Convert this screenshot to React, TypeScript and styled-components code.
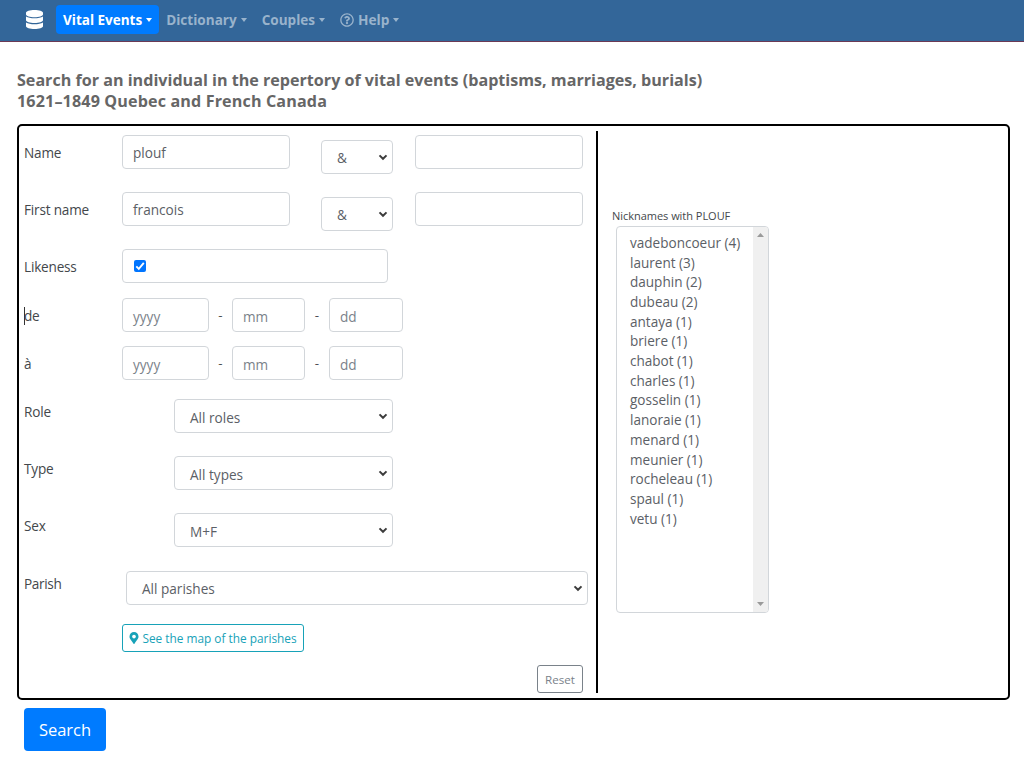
import React from 'react';
import styled, { createGlobalStyle } from 'styled-components';

const GlobalStyle = createGlobalStyle`
  *, *::before, *::after { box-sizing: border-box; }
  body {
    margin: 0;
    background: #fff;
    color: #4c4f52;
    font-family: "Open Sans", "Noto Sans", sans-serif;
    font-size: 13.4px;
  }
`;

const Navbar = styled.nav`
  display: flex;
  align-items: flex-start;
  height: 42px;
  padding: 5px 0 0 26px;
  background: #336699;
  border-bottom: 1px solid #6b3a55;
`;

const Brand = styled.a`
  display: flex;
  width: 17px;
  margin: 5px 13px 0 0;
`;

const NavItem = styled.a<{ $active?: boolean; $size?: number; $gap?: number }>`
  display: flex;
  align-items: center;
  height: 29px;
  padding: 0 7px;
  margin-right: ${p => p.$gap ?? 0}px;
  border-radius: 4px;
  font-size: ${p => p.$size ?? 13.55}px;
  font-weight: 700;
  white-space: nowrap;
  color: ${p => (p.$active ? '#fff' : '#99b3cc')};
  background: ${p => (p.$active ? '#007bff' : 'transparent')};
`;

const Caret = styled.span`
  margin: 0 0 0 4px;
  border-top: 4px solid currentColor;
  border-left: 3.5px solid transparent;
  border-right: 3.5px solid transparent;
`;

const HelpMark = styled.svg`
  margin-right: 4px;
`;

const Title = styled.h1`
  margin: 28px 0 0 17px;
  font-size: 16.13px;
  line-height: 20.6px;
  font-weight: 700;
  color: #666;
`;

const TitleLine = styled.span<{ $tracking?: number }>`
  display: block;
  letter-spacing: ${p => p.$tracking ?? 0}px;
`;

const Panel = styled.section`
  display: flex;
  align-items: flex-start;
  width: 993px;
  height: 576px;
  margin: 13px 0 0 17px;
  padding-top: 5px;
  border: 2px solid #000;
  border-radius: 5px;
`;

const FormColumn = styled.div`
  width: 579px;
  height: 562px;
  padding: 4px 0 0 5px;
  border-right: 2px solid #000;
`;

const Row = styled.div<{ $height: number }>`
  display: flex;
  align-items: flex-start;
  height: ${p => p.$height}px;
`;

const Label = styled.label<{ $tracking?: number }>`
  flex: none;
  width: 98px;
  line-height: 35px;
  font-size: 13.6px;
  letter-spacing: ${p => p.$tracking ?? -0.2}px;
  color: #43474b;
`;

const Field = styled.div<{ $width: number; $muted?: boolean }>`
  display: flex;
  flex: none;
  align-items: center;
  width: ${p => p.$width}px;
  height: 34px;
  padding: ${p => (p.$muted ? 2 : 1)}px 0 0 10px;
  border: 1px solid #d2d6da;
  border-radius: 4px;
  font-size: 13.6px;
  color: ${p => (p.$muted ? '#7a828a' : '#5b6066')};
`;

const Select = styled(Field)<{ $left?: number; $top?: number; $right?: number }>`
  justify-content: space-between;
  margin: ${p => p.$top ?? 0}px ${p => p.$right ?? 0}px 0 ${p => p.$left ?? 0}px;
  padding: 0 4px 0 15px;
`;

const SelectText = styled.span<{ $drop?: number }>`
  padding-top: ${p => p.$drop ?? 1}px;
`;

const Dash = styled.span<{ $width: number }>`
  width: ${p => p.$width}px;
  line-height: 34px;
  text-align: center;
`;

const CheckBox = styled.span`
  display: flex;
  width: 12px;
  height: 12px;
  margin: -1px 0 0 1px;
  border-radius: 2px;
  background: #0075ff;
`;

const TextCursor = styled.i`
  display: inline-block;
  width: 1px;
  height: 18px;
  margin: -3px -1px 0 0;
  vertical-align: middle;
  background: #333;
`;

const OutlineButton = styled.button<{ $tone: string; $size: number; $width: number; $left: number }>`
  display: flex;
  align-items: center;
  justify-content: center;
  gap: 3px;
  width: ${p => p.$width}px;
  height: 28px;
  margin-left: ${p => p.$left}px;
  padding: 0;
  border: 1px solid ${p => p.$tone};
  border-radius: 3px;
  background: #fff;
  color: ${p => p.$tone};
  font: 400 ${p => p.$size}px "Open Sans", sans-serif;
  white-space: nowrap;
`;

const NicknameColumn = styled.div`
  padding: 74px 0 0 14px;
`;

const NicknameTitle = styled.div`
  height: 21px;
  line-height: 21px;
  font-size: 11px;
  letter-spacing: -0.03px;
  color: #43474b;
`;

const ListBox = styled.div`
  display: flex;
  justify-content: space-between;
  width: 153px;
  height: 387px;
  margin-left: 4px;
  border: 1px solid #d2d6da;
  border-radius: 4px;
  overflow: hidden;
`;

const Options = styled.ul`
  margin: 0;
  padding: 6.8px 0 0 13px;
  list-style: none;
  font-size: 13.55px;
  line-height: 19.68px;
  white-space: nowrap;
  color: #5b6066;
`;

const ScrollTrack = styled.div`
  display: flex;
  flex-direction: column;
  align-items: center;
  justify-content: space-between;
  width: 15px;
  padding: 6px 0;
  background: #f0f0f0;
`;

const SearchButton = styled.button`
  width: 82px;
  height: 43px;
  margin: 8px 0 0 24px;
  padding: 0 0 1px;
  border: 0;
  border-radius: 4px;
  background: #007bff;
  color: #fff;
  font: 400 16.5px "Open Sans", sans-serif;
`;

const Chevron = () => (
  <svg width="10" height="8" viewBox="0 0 10 8" fill="none">
    <path d="M1.5 2.4 5 5.8 8.5 2.4" stroke="#3c3c3c" strokeWidth="2" />
  </svg>
);

const ScrollArrow = ({ up }: { up?: boolean }) => (
  <svg width="7" height="4" viewBox="0 0 7 4">
    <path d={up ? 'M0 4 3.5 0 7 4Z' : 'M0 0 3.5 4 7 0Z'} fill="#9a9a9a" />
  </svg>
);

const nicknames = [
  'vadeboncoeur (4)', 'laurent (3)', 'dauphin (2)', 'dubeau (2)', 'antaya (1)',
  'briere (1)', 'chabot (1)', 'charles (1)', 'gosselin (1)', 'lanoraie (1)',
  'menard (1)', 'meunier (1)', 'rocheleau (1)', 'spaul (1)', 'vetu (1)',
];

const NameRow = ({ label, value, height }: { label: string; value: string; height: number }) => (
  <Row $height={height}>
    <Label>{label}</Label>
    <Field $width={168}>{value}</Field>
    <Select $width={72} $left={31} $top={4.5} $right={22}>
      <SelectText>&amp;</SelectText>
      <Chevron />
    </Select>
    <Field $width={168} />
  </Row>
);

const DateRow = ({ label, height, cursor }: { label: string; height: number; cursor?: boolean }) => (
  <Row $height={height}>
    <Label>{cursor && <TextCursor />}{label}</Label>
    <Field $width={87} $muted>yyyy</Field>
    <Dash $width={23}>-</Dash>
    <Field $width={73} $muted>mm</Field>
    <Dash $width={24}>-</Dash>
    <Field $width={74} $muted>dd</Field>
  </Row>
);

const SelectLabel = styled(Label)`
  line-height: 25px;
`;

const SelectRow = ({ label, value, height }: { label: string; value: string; height: number }) => (
  <Row $height={height}>
    <SelectLabel>{label}</SelectLabel>
    <Select $width={219} $left={52}>
      <SelectText $drop={2}>{value}</SelectText>
      <Chevron />
    </Select>
  </Row>
);

export default function App() {
  return (
    <>
      <GlobalStyle />
      <Navbar>
        <Brand>
          <svg width="17" height="19" viewBox="0 0 448 512" preserveAspectRatio="none" fill="#fff">
            <path d="M448 73.143v45.714C448 159.143 347.667 192 224 192S0 159.143 0 118.857V73.143C0 32.857 100.333 0 224 0s224 32.857 224 73.143zM448 176v102.857C448 319.143 347.667 352 224 352S0 319.143 0 278.857V176c48.125 33.143 136.208 48.572 224 48.572S399.874 209.143 448 176zm0 160v102.857C448 479.143 347.667 512 224 512S0 479.143 0 438.857V336c48.125 33.143 136.208 48.572 224 48.572S399.874 369.143 448 336z" />
          </svg>
        </Brand>
        <NavItem $active $size={13.5}>Vital Events<Caret /></NavItem>
        <NavItem $size={13.55} $gap={1}>Dictionary<Caret /></NavItem>
        <NavItem $gap={1}>Couples<Caret /></NavItem>
        <NavItem $size={13.7}>
          <HelpMark width="14" height="14" viewBox="0 0 512 512" fill="currentColor">
            <path d="M256 8C119.043 8 8 119.083 8 256c0 136.997 111.043 248 248 248s248-111.003 248-248C504 119.083 392.957 8 256 8zm0 448c-110.532 0-200-89.431-200-200 0-110.495 89.472-200 200-200 110.491 0 200 89.471 200 200 0 110.53-89.431 200-200 200zm107.244-255.2c0 67.052-72.421 68.084-72.421 92.863V300c0 6.627-5.373 12-12 12h-45.647c-6.627 0-12-5.373-12-12v-8.659c0-35.745 27.1-50.034 47.579-61.516 17.561-9.845 28.324-16.541 28.324-29.579 0-17.246-21.999-28.693-39.784-28.693-23.189 0-33.894 10.977-48.942 29.969-4.057 5.12-11.46 6.071-16.666 2.124l-27.824-21.098c-5.107-3.872-6.251-11.066-2.644-16.363C184.846 131.491 214.94 112 261.794 112c49.071 0 101.45 38.304 101.45 88.8zM298 368c0 23.159-18.841 42-42 42s-42-18.841-42-42 18.841-42 42-42 42 18.841 42 42z" />
          </HelpMark>
          Help<Caret />
        </NavItem>
      </Navbar>
      <Title>
        <TitleLine>Search for an individual in the repertory of vital events (baptisms, marriages, burials)</TitleLine>
        <TitleLine $tracking={0.14}>1621–1849 Quebec and French Canada</TitleLine>
      </Title>
      <Panel>
        <FormColumn>
          <NameRow label="Name" value="plouf" height={57} />
          <NameRow label="First name" value="francois" height={57} />
          <Row $height={49}>
            <Label>Likeness</Label>
            <Field $width={266}>
              <CheckBox>
                <svg width="12" height="12" viewBox="0 0 12 12" fill="none">
                  <path d="M2.3 6.3 4.8 8.8 9.8 2.9" stroke="#fff" strokeWidth="1.9" />
                </svg>
              </CheckBox>
            </Field>
          </Row>
          <DateRow label="de" height={48} cursor />
          <DateRow label="à" height={53} />
          <SelectRow label="Role" value="All roles" height={57} />
          <SelectRow label="Type" value="All types" height={57} />
          <SelectRow label="Sex" value="M+F" height={58} />
          <Row $height={52.5}>
            <SelectLabel $tracking={-0.35}>Parish</SelectLabel>
            <Select $width={462} $left={4}>
              <SelectText>All parishes</SelectText>
              <Chevron />
            </Select>
          </Row>
          <Row $height={41.5}>
            <OutlineButton $tone="#17a2b8" $size={11.85} $width={182} $left={98}>
              <svg width="10" height="12" viewBox="0 0 384 512" fill="currentColor">
                <path d="M172.268 501.67C26.97 291.031 0 269.413 0 192 0 85.961 85.961 0 192 0s192 85.961 192 192c0 77.413-26.97 99.031-172.268 309.67-9.535 13.774-29.93 13.773-39.464 0zM192 272c44.183 0 80-35.817 80-80s-35.817-80-80-80-80 35.817-80 80 35.817 80 80 80z" />
              </svg>
              See the map of the parishes
            </OutlineButton>
          </Row>
          <Row $height={28}>
            <OutlineButton $tone="#7a828a" $size={11.6} $width={46} $left={513}>Reset</OutlineButton>
          </Row>
        </FormColumn>
        <NicknameColumn>
          <NicknameTitle>Nicknames with PLOUF</NicknameTitle>
          <ListBox>
            <Options>
              {nicknames.map(name => <li key={name}>{name}</li>)}
            </Options>
            <ScrollTrack>
              <ScrollArrow up />
              <ScrollArrow />
            </ScrollTrack>
          </ListBox>
        </NicknameColumn>
      </Panel>
      <SearchButton>Search</SearchButton>
    </>
  );
}
